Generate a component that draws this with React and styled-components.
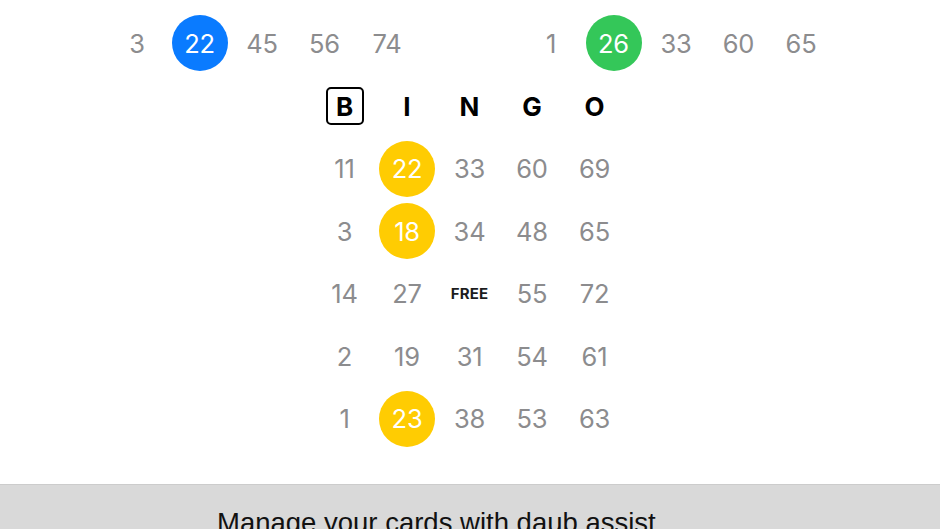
import React from "react";
import styled, { createGlobalStyle } from "styled-components";

const GlobalStyle = createGlobalStyle`
  html, body {
    margin: 0;
    padding: 0;
    background: #ffffff;
  }
  body {
    font-family: "Inter", "Noto Sans", sans-serif;
  }
`;

const Page = styled.div`
  width: 940px;
  height: 529px;
  overflow: hidden;
  display: flex;
  flex-direction: column;
  background: #ffffff;
`;

const CalledRow = styled.div`
  display: flex;
  gap: 101.5px;
  padding: 13px 0 0 105.75px;
`;

const CallGroup = styled.div`
  display: grid;
  grid-template-columns: repeat(5, 62.5px);
  height: 62px;
`;

const Cell = styled.div`
  display: flex;
  align-items: center;
  justify-content: center;
  height: ${(p) => p.$h || 60}px;
`;

const Num = styled.span`
  display: flex;
  align-items: center;
  justify-content: center;
  width: 56px;
  height: 56px;
  border-radius: 50%;
  font-size: 25.5px;
  font-weight: 400;
  letter-spacing: -0.2px;
  color: ${(p) => (p.$bg ? "#ffffff" : "#8c8c8e")};
  background: ${(p) => p.$bg || "transparent"};
`;

const Card = styled.div`
  align-self: center;
  margin: 0 0 34px -1px;
  display: grid;
  grid-template-columns: repeat(5, 62.5px);
  grid-auto-rows: 62.5px;
`;

const Letter = styled.span`
  display: flex;
  align-items: center;
  justify-content: center;
  width: 34px;
  height: 34px;
  font-size: 26px;
  font-weight: 700;
  color: #000000;
  border: ${(p) => (p.$boxed ? "2.5px solid #000" : "2.5px solid transparent")};
  border-radius: 5px;
`;

const Free = styled.span`
  font-size: 15px;
  font-weight: 700;
  color: #1c1c1e;
  letter-spacing: 0.2px;
`;

const Band = styled.div`
  flex: 1;
  background: #d9d9d9;
  border-top: 1px solid #cccccc;
  padding: 24px 0 0 217px;
`;

const BandText = styled.div`
  font-family: "Liberation Sans", Arial, sans-serif;
  font-size: 27.5px;
  line-height: 1;
  color: #111111;
`;

const BLUE = "#0a7bff";
const GREEN = "#34c759";
const YELLOW = "#ffcc02";

const leftCalls = [3, 22, 45, 56, 74];
const rightCalls = [1, 26, 33, 60, 65];

const rows = [
  [11, 22, 33, 60, 69],
  [3, 18, 34, 48, 65],
  [14, 27, "FREE", 55, 72],
  [2, 19, 31, 54, 61],
  [1, 23, 38, 53, 63],
];

const marked = { "0-1": true, "1-1": true, "4-1": true };

export default function App() {
  return (
    <Page>
      <GlobalStyle />
      <CalledRow>
        <CallGroup>
          {leftCalls.map((n, i) => (
            <Cell key={i}>
              <Num $bg={i === 1 ? BLUE : null}>{n}</Num>
            </Cell>
          ))}
        </CallGroup>
        <CallGroup>
          {rightCalls.map((n, i) => (
            <Cell key={i}>
              <Num $bg={i === 1 ? GREEN : null}>{n}</Num>
            </Cell>
          ))}
        </CallGroup>
      </CalledRow>
      <Card>
        {"BINGO".split("").map((l, i) => (
          <Cell key={l} $h={62.5}>
            <Letter $boxed={i === 0}>{l}</Letter>
          </Cell>
        ))}
        {rows.map((row, r) =>
          row.map((n, c) => (
            <Cell key={`${r}-${c}`} $h={62.5}>
              {n === "FREE" ? (
                <Free>FREE</Free>
              ) : (
                <Num $bg={marked[`${r}-${c}`] ? YELLOW : null}>{n}</Num>
              )}
            </Cell>
          ))
        )}
      </Card>
      <Band>
        <BandText>Manage your cards with daub assist</BandText>
      </Band>
    </Page>
  );
}
